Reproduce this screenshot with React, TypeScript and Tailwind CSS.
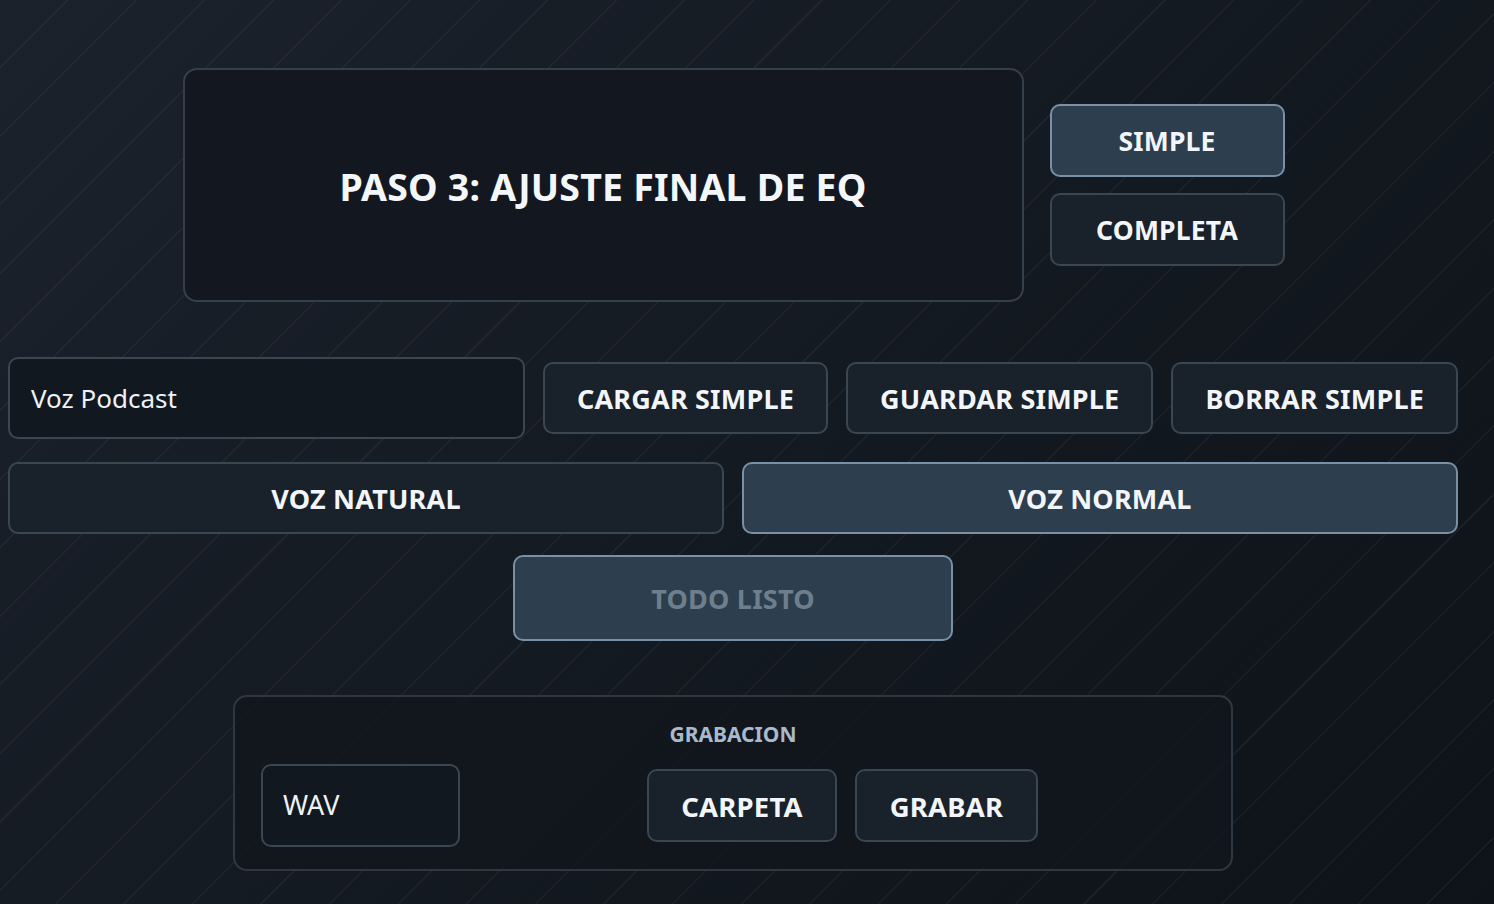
import React from "react";

const btnBase =
  "flex items-center justify-center rounded-[10px] border-2 font-bold text-[#f2f6fa] tracking-[0.2px] pt-[2px]";
const btnIdle = "bg-[#19212a] border-[#3b4653]";
const btnActive = "bg-[#2d3e4e] border-[#7a90a4]";

export default function App() {
  return (
    <div className="min-h-screen w-full font-['Noto_Sans','Open_Sans',sans-serif] bg-[repeating-linear-gradient(135deg,transparent_0px,transparent_47px,rgba(255,255,255,0.045)_47px,rgba(255,255,255,0.045)_48.5px),linear-gradient(135deg,#1b222c_0%,#131920_55%,#0e1319_100%)] pt-[68px] pb-[34px]">
      <div className="w-[1450px] ml-[8px] flex flex-col">
        {/* Header row */}
        <div className="flex items-center justify-center gap-[26px] pl-[1px]">
          <div className="w-[841px] h-[234px] rounded-[14px] border-2 border-[#353f4b] bg-[#131820] flex items-center justify-center">
            <h1 className="text-[37.5px] font-bold text-[#f4f7fa] tracking-[0.2px] mt-[4px]">
              PASO 3: AJUSTE FINAL DE EQ
            </h1>
          </div>
          <div className="flex flex-col gap-[16px]">
            <button className={`${btnBase} ${btnActive} w-[235px] h-[73px] text-[26.5px]`}>SIMPLE</button>
            <button className={`${btnBase} ${btnIdle} w-[235px] h-[73px] text-[26.5px]`}>COMPLETA</button>
          </div>
        </div>

        {/* Presets row */}
        <div className="mt-[55px] flex items-center gap-[18px]">
          <div className="flex-1 h-[82px] rounded-[10px] border-2 border-[#3b4653] bg-[#121820] flex items-center px-[21px]">
            <span className="text-[26px] text-[#eef2f6]">Voz Podcast</span>
          </div>
          <button className={`${btnBase} ${btnIdle} h-[72px] px-[32px] text-[27px]`}>CARGAR SIMPLE</button>
          <button className={`${btnBase} ${btnIdle} h-[72px] px-[32px] text-[27px]`}>GUARDAR SIMPLE</button>
          <button className={`${btnBase} ${btnIdle} h-[72px] px-[32px] text-[27px]`}>BORRAR SIMPLE</button>
        </div>

        {/* Voice row */}
        <div className="mt-[23px] grid grid-cols-2 gap-[18px]">
          <button className={`${btnBase} ${btnIdle} h-[72px] text-[27px]`}>VOZ NATURAL</button>
          <button className={`${btnBase} ${btnActive} h-[72px] text-[27px]`}>VOZ NORMAL</button>
        </div>

        {/* Todo listo */}
        <div className="mt-[21px] flex justify-center">
          <button className={`${btnBase} bg-[#2d3e4e] border-[#7a90a4] w-[440px] h-[86px] text-[27px] !text-[#6d7f8d]`}>
            TODO LISTO
          </button>
        </div>

        {/* Grabacion panel */}
        <div className="mt-[54px] flex justify-center">
          <div className="w-[1000px] h-[176px] rounded-[14px] border-2 border-[#2e3843] bg-[#11161d]/80 px-[26px] pt-[23px]">
            <div className="text-center text-[21px] font-bold text-[#a8bacb] leading-[28px]">GRABACION</div>
            <div className="mt-[16px] flex items-center">
              <div className="w-[199px] h-[83px] rounded-[10px] border-2 border-[#3b4653] bg-[#121820] flex items-center px-[20px]">
                <span className="text-[27px] text-[#eef2f6]">WAV</span>
              </div>
              <div className="ml-[187px] flex items-center gap-[18px]">
                <button className={`${btnBase} ${btnIdle} w-[190px] h-[73px] text-[27.5px]`}>CARPETA</button>
                <button className={`${btnBase} ${btnIdle} w-[183px] h-[73px] text-[27.5px]`}>GRABAR</button>
              </div>
            </div>
          </div>
        </div>
      </div>
    </div>
  );
}
